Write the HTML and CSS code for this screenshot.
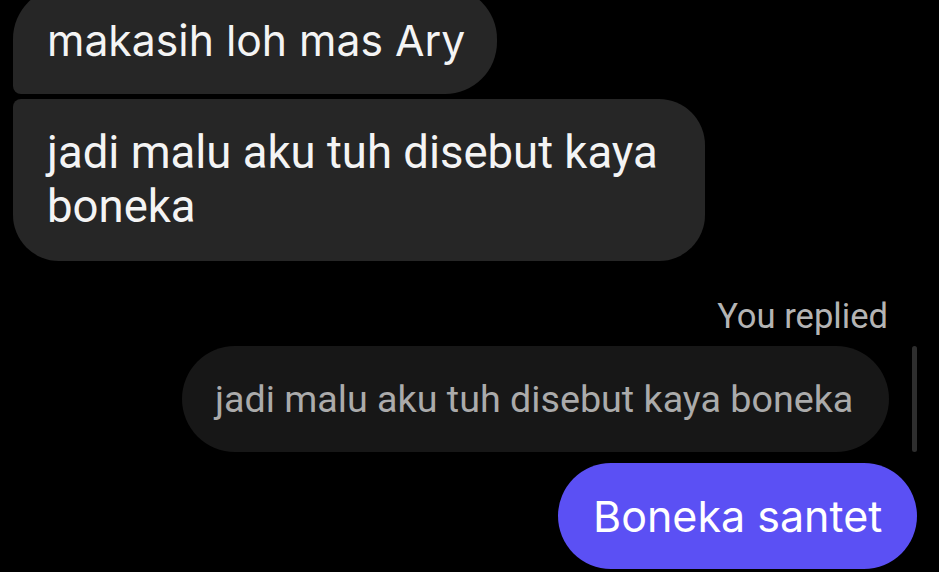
FILE: index.html
```html
<!DOCTYPE html>
<html>
<head>
<meta charset="utf-8">
<link rel="stylesheet" href="styles.css">
</head>
<body>
<div class="chat">
  <div class="msg in first"><span class="t1">makasih loh mas Ary</span></div>
  <div class="msg in second"><span class="t2">jadi malu aku tuh disebut kaya<br>boneka</span></div>
  <div class="replied">You replied</div>
  <div class="quote-row">
    <div class="quote"><span class="qt">jadi malu aku tuh disebut kaya boneka</span></div>
    <div class="bar"></div>
  </div>
  <div class="out-row">
    <div class="msg out"><span class="t3">Boneka santet</span></div>
  </div>
</div>
</body>
</html>
```
FILE: styles.css
```css
html, body {
  margin: 0;
  padding: 0;
  background: #000;
  height: 100%;
  overflow: hidden;
}
.chat {
  display: flex;
  flex-direction: column;
  padding: 0 22px 0 13px;
}
.msg {
  color: #f4f4f4;
}
.in {
  background: #262626;
  align-self: flex-start;
}
.first {
  margin-top: -13px;
  height: 107px;
  box-sizing: border-box;
  padding: 0 34px;
  display: flex;
  align-items: center;
  border-radius: 52px 52px 52px 8px;
  width: 484px;
}
.t1 {
  font-family: Inter, "Noto Sans", sans-serif;
  font-size: 42.7px;
  line-height: 54px;
  white-space: nowrap;
}
.second {
  margin-top: 5px;
  width: 692px;
  height: 162px;
  box-sizing: border-box;
  padding: 27px 34px;
  border-radius: 8px 46px 46px 46px;
}
.t2 {
  display: block;
  font-family: Roboto, "Noto Sans", sans-serif;
  font-size: 45.5px;
  line-height: 54px;
  white-space: nowrap;
}
.replied {
  align-self: flex-end;
  margin-top: 30px;
  margin-right: 29px;
  color: #b4b4b4;
  font-family: Roboto, "Noto Sans", sans-serif;
  font-size: 34.6px;
  line-height: 50px;
}
.quote-row {
  display: flex;
  justify-content: flex-end;
  align-items: stretch;
  gap: 23px;
  margin-top: 5px;
}
.quote {
  background: #171717;
  height: 106px;
  width: 707px;
  box-sizing: border-box;
  border-radius: 53px;
  display: flex;
  align-items: center;
  padding: 0 33px;
  color: #ababab;
}
.qt {
  font-family: Roboto, "Noto Sans", sans-serif;
  font-size: 37.7px;
  white-space: nowrap;
}
.bar {
  width: 5px;
  background: #2e2e2e;
  border-radius: 3px;
}
.out-row {
  display: flex;
  justify-content: flex-end;
  margin-top: 11px;
}
.out {
  background: #5b50f4;
  color: #fff;
  width: 359px;
  height: 106px;
  box-sizing: border-box;
  border-radius: 53px;
  display: flex;
  align-items: center;
  padding: 0 35px;
}
.t3 {
  font-family: Inter, "Noto Sans", sans-serif;
  font-size: 43px;
  white-space: nowrap;
}
```
